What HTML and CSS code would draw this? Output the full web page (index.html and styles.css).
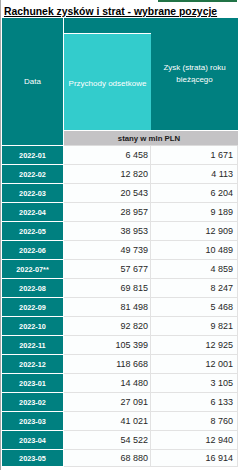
FILE: index.html
```html
<!DOCTYPE html>
<html lang="pl">
<head>
<meta charset="utf-8">
<link rel="stylesheet" href="styles.css">
</head>
<body>
<div class="page">
  <div class="selbar"></div>
  <div class="title">Rachunek zysków i strat - wybrane pozycje</div>
  <div class="sheet">
    <div class="h-data">Data</div>
    <div class="h-top"></div>
    <div class="h-przych">Przychody odsetkowe</div>
    <div class="h-zysk">Zysk (strata) roku bieżącego</div>
    <div class="h-stany">stany w mln PLN</div>

    <div class="d">2022-01</div><div class="n n2">6 458</div><div class="n n3">1 671</div>
    <div class="d">2022-02</div><div class="n n2">12 820</div><div class="n n3">4 113</div>
    <div class="d">2022-03</div><div class="n n2">20 543</div><div class="n n3">6 204</div>
    <div class="d">2022-04</div><div class="n n2">28 957</div><div class="n n3">9 189</div>
    <div class="d">2022-05</div><div class="n n2">38 953</div><div class="n n3">12 909</div>
    <div class="d">2022-06</div><div class="n n2">49 739</div><div class="n n3">10 489</div>
    <div class="d">2022-07**</div><div class="n n2">57 677</div><div class="n n3">4 859</div>
    <div class="d">2022-08</div><div class="n n2">69 815</div><div class="n n3">8 247</div>
    <div class="d">2022-09</div><div class="n n2">81 498</div><div class="n n3">5 468</div>
    <div class="d">2022-10</div><div class="n n2">92 820</div><div class="n n3">9 821</div>
    <div class="d">2022-11</div><div class="n n2">105 399</div><div class="n n3">12 925</div>
    <div class="d">2022-12</div><div class="n n2">118 668</div><div class="n n3">12 001</div>
    <div class="d">2023-01</div><div class="n n2">14 480</div><div class="n n3">3 105</div>
    <div class="d">2023-02</div><div class="n n2">27 091</div><div class="n n3">6 133</div>
    <div class="d">2023-03</div><div class="n n2">41 021</div><div class="n n3">8 760</div>
    <div class="d">2023-04</div><div class="n n2">54 522</div><div class="n n3">12 940</div>
    <div class="d">2023-05</div><div class="n n2">68 880</div><div class="n n3">16 914</div>
  </div>
</div>
</body>
</html>
```
FILE: styles.css
```css
html, body {
  margin: 0;
  padding: 0;
  background: #ffffff;
}
body {
  font-family: "Liberation Sans", Arial, sans-serif;
}
.page {
  width: 239px;
  height: 470px;
  border-left: 1px solid #a8a8a8;
  padding-left: 1px;
  box-sizing: border-box;
  overflow: hidden;
}
.selbar {
  height: 2px;
  width: 79px;
  margin-left: 156px;
  background: #217346;
}
.title {
  margin-top: 4px;
  padding-left: 2px;
  height: 12px;
  line-height: 12px;
  font-size: 10.4px;
  font-weight: bold;
  color: #000;
  text-decoration: underline;
  white-space: nowrap;
}
.sheet {
  display: grid;
  grid-template-columns: 62px 87px 87px;
  grid-template-rows: 16px 97px 15px repeat(16, 19px) 17px;
}
.sheet > div {
  box-sizing: border-box;
}
.h-data {
  grid-column: 1;
  grid-row: 1 / 4;
  background: #008080;
  color: #fff;
  border-right: 1px solid #fff;
  border-bottom: 1px solid #fff;
  font-size: 8px;
  display: flex;
  align-items: center;
  justify-content: center;
}
.h-top {
  grid-column: 2;
  grid-row: 1;
  background: #008080;
  border-bottom: 1px solid #fff;
}
.h-przych {
  grid-column: 2;
  grid-row: 2;
  background: #33cccc;
  color: #fff;
  border-bottom: 1px solid #fff;
  font-size: 8px;
  display: flex;
  align-items: center;
  justify-content: center;
  padding-top: 2px;
}
.h-zysk {
  grid-column: 3;
  grid-row: 1 / 3;
  background: #008080;
  color: #fff;
  border-bottom: 1px solid #fff;
  font-size: 8px;
  line-height: 12px;
  display: flex;
  align-items: center;
  justify-content: center;
  text-align: center;
  padding: 0 8px;
}
.h-stany {
  grid-column: 2 / 4;
  grid-row: 3;
  background: #c4c3c5;
  color: #1a1a1a;
  font-size: 7.8px;
  font-weight: bold;
  border-bottom: 1px solid #dcdcdc;
  display: flex;
  align-items: center;
  justify-content: center;
  padding-right: 4px;
}
.d {
  background: #008080;
  color: #fff;
  font-size: 7.3px;
  font-weight: bold;
  border-right: 1px solid #fff;
  border-bottom: 1px solid #fff;
  display: flex;
  align-items: center;
  justify-content: center;
}
.n {
  background: #fcfefe;
  color: #262626;
  font-size: 9px;
  border-right: 1px solid #e2e2e2;
  border-bottom: 1px solid #e2e2e2;
  display: flex;
  align-items: center;
  justify-content: flex-end;
}
.n2 {
  padding-right: 2px;
}
.n3 {
  padding-right: 4px;
}
```
